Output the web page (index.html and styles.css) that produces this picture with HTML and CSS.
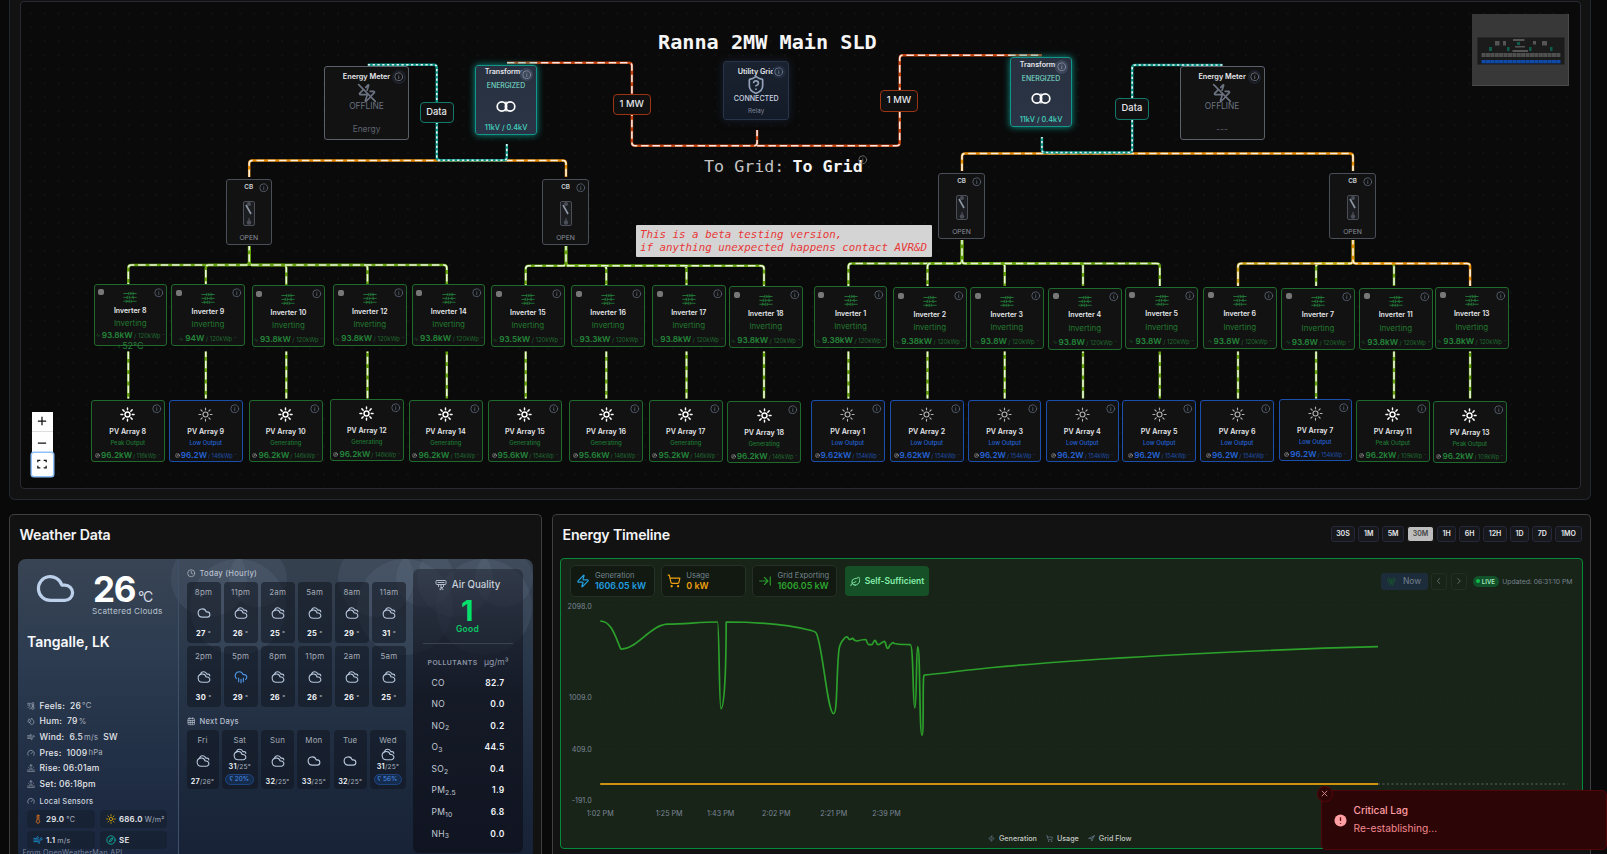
FILE: index.html
```html
<!DOCTYPE html>
<html lang="en">
<head>
<meta charset="utf-8">
<title>Ranna 2MW Main SLD</title>
<link rel="stylesheet" href="styles.css">
</head>
<body>
<svg class="defs" width="0" height="0">
  <symbol id="info" viewBox="0 0 24 24"><circle cx="12" cy="12" r="10"/><path d="M12 16.500v-5M12 8v.01"/></symbol>
  <symbol id="cloud" viewBox="0 0 24 24"><path d="M17.500 19H9a7 7 0 1 1 6.710-9h1.790a4.500 4.500 0 1 1 0 9Z"/></symbol>
  <symbol id="cloudy" viewBox="0 0 24 24"><path d="M17.500 21H9a7 7 0 1 1 6.710-9h1.790a4.500 4.500 0 1 1 0 9Z"/><path d="M22 10a3 3 0 0 0-3-3h-2.207a5.502 5.502 0 0 0-10.702.5"/></symbol>
  <symbol id="rain" viewBox="0 0 24 24"><path d="M4 14.900A7 7 0 1 1 15.710 8h1.790a4.500 4.500 0 0 1 2.500 8.242M16 14v6M8 14v6M12 16v6"/></symbol>
  <symbol id="zap" viewBox="0 0 24 24"><path d="M4 14a1 1 0 0 1-.78-1.630l9.900-10.200a.5.5 0 0 1 .86.46l-1.920 6.020A1 1 0 0 0 13 10h7a1 1 0 0 1 .78 1.630l-9.900 10.200a.5.5 0 0 1-.86-.46l1.920-6.020A1 1 0 0 0 11 14z"/></symbol>
  <symbol id="zapoff" viewBox="0 0 24 24"><path d="M10.500 5.200 13.400 2.100a.5.5 0 0 1 .6.500l-1.900 6M15.700 10H20a1 1 0 0 1 .78 1.630l-3.200 3.300M16.500 16.500l-5.600 5.400a.5.5 0 0 1-.86-.46L12 15.400A1 1 0 0 0 11 14H4a1 1 0 0 1-.78-1.630l4.300-4.400M2 2l20 20"/></symbol>
  <symbol id="cart" viewBox="0 0 24 24"><circle cx="8" cy="21" r="1"/><circle cx="19" cy="21" r="1"/><path d="M2.050 2.050h2l2.660 12.420a2 2 0 0 0 2 1.580h9.780a2 2 0 0 0 1.950-1.570l1.650-7.430H5.120"/></symbol>
  <symbol id="arrowend" viewBox="0 0 24 24"><path d="M17 12H3M11 18l6-6-6-6M21 5v14"/></symbol>
  <symbol id="leaf" viewBox="0 0 24 24"><path d="M11 20A7 7 0 0 1 9.800 6.100C15.500 5 17 4.480 19 2c1 2 2 4.180 2 8 0 5.500-4.780 10-10 10Z"/><path d="M2 21c0-3 1.850-5.360 5.080-6C9.500 14.520 12 13 13 12"/></symbol>
  <symbol id="send" viewBox="0 0 24 24"><path d="M3 11 22 2l-9 19-2-8zM22 2 11 13"/></symbol>
  <symbol id="tower" viewBox="0 0 24 24"><path d="M4.900 16.100C1 12.200 1 5.800 4.900 1.900M7.800 4.700a6.140 6.140 0 0 0-.8 7.500M16.200 4.800c2 2 2.260 5.110.8 7.470M19.100 1.900a9.960 9.960 0 0 1 0 14.100M9.500 18h5M8 22l4-11 4 11"/><circle cx="12" cy="9" r="2"/></symbol>
  <symbol id="clock" viewBox="0 0 24 24"><circle cx="12" cy="12" r="10"/><path d="M12 6v6l4 2"/></symbol>
  <symbol id="calendar" viewBox="0 0 24 24"><path d="M8 2v4M16 2v4M3 10h18M3 15.500h18M9 10v11M15 10v11"/><rect x="3" y="4" width="18" height="18" rx="2"/></symbol>
  <symbol id="gauge" viewBox="0 0 24 24"><path d="m12 14 4-4M3.340 19a10 10 0 1 1 17.320 0"/></symbol>
  <symbol id="wind" viewBox="0 0 24 24"><path d="M17.700 7.700a2.500 2.500 0 1 1 1.800 4.300H2M9.600 4.600A2 2 0 1 1 11 8H2M12.600 19.400A2 2 0 1 0 14 16H2"/></symbol>
  <symbol id="drops" viewBox="0 0 24 24"><path d="M7 16.300c2.200 0 4-1.830 4-4.050 0-2.500-2.800-4-4-6.950-1.200 2.950-4 4.450-4 6.950 0 2.220 1.800 4.050 4 4.050zM12.600 6.600A11 11 0 0 0 14 3c.5 2.500 2 4.900 4 6.500s3 3.500 3 5.500a7 7 0 0 1-11.900 5"/></symbol>
  <symbol id="rise" viewBox="0 0 24 24"><path d="M12 2v8M4.900 10.900l1.400 1.400M2 18h2M20 18h2M19.100 10.900l-1.400 1.400M22 22H2M8 6l4-4 4 4M16 18a4 4 0 0 0-8 0"/></symbol>
  <symbol id="feels" viewBox="0 0 24 24"><path d="M2 4h6M2 9h4M12 4a5 5 0 0 0-2 9M3 17l3-3M9 21v-3M15 4a2.500 2.500 0 0 1 5 0v11a4 4 0 1 1-5 0zM17.500 8v9"/></symbol>
  <symbol id="thermo" viewBox="0 0 24 24"><path d="M14 4v10.540a4 4 0 1 1-4 0V4a2 2 0 0 1 4 0Z"/></symbol>
  <symbol id="sun" viewBox="0 0 24 24"><circle cx="12" cy="12" r="4"/><path d="M12 1.500v3M12 19.500v3M4.600 4.600l2.100 2.100M17.300 17.300l2.100 2.100M1.500 12h3M19.500 12h3M4.600 19.400l2.100-2.100M17.300 6.700l2.100-2.100"/></symbol>
  <symbol id="compass" viewBox="0 0 24 24"><circle cx="12" cy="12" r="10"/><path d="m16.200 7.800-2.900 6.500-5.500 1.900 2.900-6.500z"/></symbol>
  <symbol id="air" viewBox="0 0 24 24"><path d="M4 3h16a2 2 0 0 1 2 2v4a2 2 0 0 1-2 2H4a2 2 0 0 1-2-2V5a2 2 0 0 1 2-2zM6 7h12M7 11v4M17 11v4M12 11v10a2 2 0 0 1-3-1M16 21a2 2 0 0 1 0-4h-4"/></symbol>
  <symbol id="bridge" viewBox="0 0 36 36"><path d="M2 9h13M20 9h14M2 19h9M16 19h18M2 29h14M21 29h13M15 6v6M20 6v6M11 16v6M16 16v6M16 26v6M21 26v6M25 6l4 3-4 3M27 16l-4 3 4 3M8 26l4 3-4 3"/></symbol>
  <symbol id="shield" viewBox="0 0 24 24"><path d="M20 13c0 5-3.500 7.500-7.660 8.950a1 1 0 0 1-.67-.01C7.500 20.500 4 18 4 13V6a1 1 0 0 1 1-1c2 0 4.500-1.200 6.240-2.720a1.170 1.170 0 0 1 1.520 0C14.510 3.810 17 5 19 5a1 1 0 0 1 1 1z"/><path d="M9.100 9a3 3 0 0 1 5.820 1c0 2-3 3-3 3M12 17h.01"/></symbol>
  <symbol id="pulse" viewBox="0 0 24 24"><path d="M2 12h3l4-8 6 16 3-8h4"/></symbol>
</svg>

<section class="sld-card">
  <div class="canvas" id="canvas">
    <svg class="edges" id="edges" width="1561" height="487" viewBox="20.500 2 1561 487"></svg>
    <div class="minimap"><svg width="97" height="72" id="mini"></svg></div>
    <div class="controls">
      <span><svg viewBox="0 0 12 12"><path d="M6 1v10M1 6h10"/></svg></span>
      <span><svg viewBox="0 0 12 12"><path d="M1 6h10"/></svg></span>
      <span class="focus"><svg viewBox="0 0 12 12"><path d="M1 4V1.500h3M8 1.500h3V4M11 8v2.500H8M4 10.500H1V8"/></svg></span>
    </div>
  </div>
</section>

<div class="row">
  <section class="card weather">
    <h2>Weather Data</h2>
    <div class="wx">
      <svg class="puffs" width="516" height="300"><g id="puffs"></g></svg>
      <div class="wx-now">
        <div class="now-top">
          <svg class="ic big"><use href="#cloud"/></svg>
          <div class="temp"><div class="deg"><b>26</b><i>°C</i></div><p>Scattered Clouds</p></div>
        </div>
        <div class="place">Tangalle, LK</div>
        <ul class="facts">
          <li><svg class="ic"><use href="#feels"/></svg>Feels:&nbsp; 26<i>°C</i></li>
          <li><svg class="ic"><use href="#drops"/></svg>Hum:&nbsp; 79<i>%</i></li>
          <li><svg class="ic"><use href="#wind"/></svg>Wind:&nbsp; 6.5<i>m/s</i>&nbsp; SW</li>
          <li><svg class="ic"><use href="#gauge"/></svg>Pres:&nbsp; 1009<i>hPa</i></li>
          <li><svg class="ic"><use href="#rise"/></svg>Rise: 06:01am</li>
          <li><svg class="ic"><use href="#rise"/></svg>Set: 06:18pm</li>
        </ul>
        <div class="local"><svg class="ic"><use href="#gauge"/></svg>Local Sensors</div>
        <div class="sensors">
          <span><svg class="ic orange"><use href="#thermo"/></svg>29.0<i>°C</i></span>
          <span><svg class="ic yellow"><use href="#sun"/></svg>686.0<i>W/m²</i></span>
          <span><svg class="ic sky"><use href="#wind"/></svg>1.1<i>m/s</i></span>
          <span><svg class="ic teal"><use href="#compass"/></svg>SE</span>
        </div>
        <div class="source">From OpenWeatherMap API</div>
      </div>
      <div class="wx-mid">
        <h3><svg class="ic"><use href="#clock"/></svg>Today (Hourly)</h3>
        <div class="hours" id="hours"></div>
        <h3 class="next"><svg class="ic"><use href="#calendar"/></svg>Next Days</h3>
        <div class="days" id="days"></div>
      </div>
      <div class="air">
        <div class="air-t"><svg class="ic"><use href="#air"/></svg>Air Quality</div>
        <div class="aqi">1</div>
        <div class="good">Good</div>
        <div class="poll-h"><b>POLLUTANTS</b><span>µg/m³</span></div>
        <dl>
          <div><dt>CO</dt><dd>82.7</dd></div>
          <div><dt>NO</dt><dd>0.0</dd></div>
          <div><dt>NO<sub>2</sub></dt><dd>0.2</dd></div>
          <div><dt>O<sub>3</sub></dt><dd>44.5</dd></div>
          <div><dt>SO<sub>2</sub></dt><dd>0.4</dd></div>
          <div><dt>PM<sub>2.5</sub></dt><dd>1.9</dd></div>
          <div><dt>PM<sub>10</sub></dt><dd>6.8</dd></div>
          <div><dt>NH<sub>3</sub></dt><dd>0.0</dd></div>
        </dl>
      </div>
    </div>
  </section>

  <section class="card energy">
    <header>
      <h2>Energy Timeline</h2>
      <nav><a>30S</a><a>1M</a><a>5M</a><a class="on">30M</a><a>1H</a><a>6H</a><a>12H</a><a>1D</a><a>7D</a><a>1MO</a></nav>
    </header>
    <div class="chart">
      <div class="stats">
        <div class="stat blue"><svg class="ic"><use href="#zap"/></svg><p>Generation<b>1606.05 kW</b></p></div>
        <div class="stat amber"><svg class="ic"><use href="#cart"/></svg><p>Usage<b>0 kW</b></p></div>
        <div class="stat green"><svg class="ic"><use href="#arrowend"/></svg><p>Grid Exporting<b>1606.05 kW</b></p></div>
        <div class="self"><svg class="ic"><use href="#leaf"/></svg>Self-Sufficient</div>
        <div class="live-bar">
          <span class="now"><svg class="ic"><use href="#tower"/></svg>Now</span>
          <span class="step"><svg class="ic"><path d="M5.800 2.500 3.200 5l2.600 2.500"/></svg></span>
          <span class="step"><svg class="ic"><path d="M3.700 2.500 6.300 5 3.700 7.500"/></svg></span>
          <span class="live">LIVE</span>
          <span class="upd">Updated: 06:31:10 PM</span>
        </div>
      </div>
      <svg class="plot" width="1020" height="220" viewBox="560.800 602 1020 220">
        <g class="grid"><path d="M600 605.500H1567M600 698H1567M600 749.500H1567M600 800H1567"/></g>
        <g class="ylab"><text x="591.500" y="608.800">2098.0</text><text x="591.500" y="700">1009.0</text><text x="591.500" y="752">409.0</text><text x="591.500" y="803">-191.0</text></g>
        <g class="xlab"><text x="600" y="816">1:02 PM</text><text x="669" y="816">1:25 PM</text><text x="720.500" y="816">1:43 PM</text><text x="776" y="816">2:02 PM</text><text x="833.500" y="816">2:21 PM</text><text x="886.300" y="816">2:39 PM</text></g>
        <path class="gen" d="M600 621C611 621 615 636 620.500 649C636 650 650 625 667 624.200C684 624.200 700 622 717.300 622C719 622 719 708.700 720.700 708.700C723 708.700 725.800 690 726 622C765 622 790 625 811 630.500Q815 631.500 815.600 632.500C822 640 827 713.700 833.500 713.700C837.500 713.700 836 670 839 648C841 640 843.500 639.500 845 637.500Q847 635.500 848.500 639Q850 640 852.500 638.200Q854 641 857 641Q862 639.500 865.500 639.500C867 640 866.500 644.500 868.500 644.600H871.500C873 644.600 873.500 640.300 874.700 640.300C876 640.300 876 644.700 878 644.700C880.500 644.700 882 641.300 884.300 641.300C885.500 641.300 886 648.500 887.300 648.500C889 648.500 889 644.500 890.500 644.500Q892.500 641.500 894 643.500C899 644.700 904 644.300 910 644.700C913.500 644.700 912.500 708 914.600 708C916.700 708 915.800 646.500 917.500 646.500C920.200 646.500 919 735.300 921.800 735.300C924 735.300 922 675 924 675.200C946 673 970 669.500 992.700 667.500C1080 659.500 1230 650.500 1377.800 646.700"/>
        <path class="use" d="M600 784H1377.800"/>
        <path class="dots" d="M1377.800 784H1567"/>
      </svg>
      <div class="legend"><span><svg class="ic"><use href="#zap"/></svg>Generation</span><span><svg class="ic"><use href="#cart"/></svg>Usage</span><span><svg class="ic"><use href="#send"/></svg>Grid Flow</span></div>
    </div>
  </section>
</div>

<aside class="toast">
  <span class="close"><svg viewBox="0 0 10 10"><path d="M2 2l6 6M8 2 2 8"/></svg></span>
  <span class="bang"><svg viewBox="0 0 14 14"><circle cx="7" cy="7" r="6.500"/><path d="M7 3.500v4M7 10v.8"/></svg></span>
  <p>Critical Lag<small>Re-establishing...</small></p>
</aside>
<script src="app.js"></script>
</body>
</html>
```
FILE: styles.css
```css
* { box-sizing: border-box; }
body { margin: 0; width: 1607px; height: 854px; overflow: hidden; position: relative; background: #090909; color: #e5e7eb; font-family: Inter, "Liberation Sans", sans-serif; }
h2, h3, p, ul, dl, dd { margin: 0; padding: 0; }
i { font-style: normal; }
.defs { position: absolute; }
.ic { fill: none; stroke: currentColor; stroke-width: 2; stroke-linecap: round; stroke-linejoin: round; flex: none; overflow: visible; }

/* single line diagram */
.sld-card { margin-left: 9px; width: 1582px; height: 499.500px; padding: 1px 9.500px 10px; background: #121212; border: 1px solid #232733; border-top: 0; border-radius: 0 0 6px 6px; }
.canvas { position: relative; height: 488px; border: 1px solid #282b35; border-radius: 4px; background-color: #0a0a0a; background-image: radial-gradient(circle at 50% 50%, #232323 0, #1b1b1b .5px, transparent .9px); background-size: 13.970px 13.970px; background-position: 2.700px 4.500px; overflow: hidden; }
.edges { position: absolute; left: 0; top: 0; fill: none; stroke-linejoin: round; }
.node { position: absolute; background: #121212; border: 1px solid #1f6b2e; border-radius: 3px; text-align: center; white-space: nowrap; }
.node > * { position: absolute; left: 0; right: 0; margin: auto; line-height: 10px; }
.node .info { left: auto; right: 2.500px; top: 3px; width: 9.500px; height: 9.500px; color: #566070; margin: 0; stroke-width: 2.300; }
.nm { font-size: 7px; font-weight: 600; color: #e5e7eb; }
.inv, .pv { width: 73.500px; height: 62px; }
.inv .nm { top: 21.700px; }
.inv .led { left: 3.500px; top: 4.500px; width: 6px; height: 6px; margin: 0; border-radius: 2px; background: #777; }
.inv .ico { top: 5.500px; width: 14px; height: 14px; color: #23803a; stroke-width: 2.200; }
.inv .st { top: 34px; font-size: 7.900px; color: #22782f; }
.pw { top: 48px; display: flex; justify-content: center; align-items: baseline; gap: 1.500px; color: #24863a; font-size: 6px; }
.pw b { font-size: 8.200px; font-weight: 600; }
.pw span { opacity: .75; }
.pw svg { width: 4.500px; height: 4.500px; opacity: .8; }
.inv.hot .nm { top: 21.500px; }
.inv.hot .st { top: 33.300px; }
.inv.hot .pw { top: 45px; }
.inv .tc { top: 56.500px; font-size: 8.900px; color: #248039; display: flex; align-items: center; justify-content: center; gap: 1px; }
.inv .tc svg { width: 4px; height: 5px; }
.pv .ico { top: 6px; width: 15px; height: 15px; color: #fff; stroke-width: 2.300; }
.pv .nm { top: 25.700px; font-size: 7.100px; }
.pv .st { top: 36.500px; font-size: 5.900px; font-weight: 500; color: #1f7832; }
.pv .pw svg { color: #bbb; opacity: 1; width: 5px; height: 5px; }
.pv .pw { gap: 1px; top: 49px; }
.pv .pw span { font-size: 5.600px; }
.pv.low { border-color: #1b4fae; }
.pv.low .st, .pv.low .pw { color: #2463d6; }
.pv.low .ico { color: #b5b5b5; stroke-width: 1.800; }
.cb { width: 46.500px; height: 66.500px; border-color: #4a4e58; font-size: 6.800px; color: #8b919c; }
.cb .nm { top: 2.500px; font-size: 6.300px; color: #d1d5db; }
.cb .sw { top: 21px; width: 12px; height: 25px; }
.cb .st { top: 53px; }
.em { width: 85px; height: 74px; border-color: #5c606a; color: #6b7280; }
.em .nm { top: 4.800px; font-size: 7.300px; }
.em .ico { top: 15.500px; width: 20px; height: 20px; }
.em .st { top: 34px; font-size: 8.400px; }
.em .ft { top: 57px; font-size: 8.400px; color: #5e6470; }
.em .info { top: 5px; right: 4.500px; color: #6b7280; border-radius: 50%; box-shadow: 0 0 0 2px #1c212b; }
.tr { width: 62px; height: 70px; border-color: #12958a; background: linear-gradient(#293140, #2a3446); box-shadow: 0 0 7px #0d9488; color: #5eead4; }
.tr .nm { top: 1.500px; font-size: 7.100px; }
.tr .st { top: 15.500px; font-size: 6.900px; color: #7fe3d3; }
.tr .ico { top: 33px; width: 22px; height: 15px; color: #fff; }
.tr .ft { top: 57px; font-size: 7.300px; font-weight: 500; color: #45d6c0; }
.tr .info { top: 4px; right: 5px; color: #7f8ba0; background: #3d4759; border-radius: 50%; box-shadow: 0 0 0 2px #3d4759; }
.ug { width: 66px; height: 58.500px; border-color: #283548; background: linear-gradient(#1a2230, #141b28); box-shadow: 0 0 8px #172032; }
.ug .nm { top: 5px; font-size: 7.200px; }
.ug .ico { top: 12.500px; width: 20px; height: 20px; color: #94a3b8; }
.ug .st { top: 32px; font-size: 7.100px; font-weight: 500; color: #cbd5e1; }
.ug .ft { top: 44px; font-size: 6.300px; color: #7d8799; }
.ug .info { top: 5px; right: 4.500px; color: #64748b; background: #222c3d; border-radius: 50%; box-shadow: 0 0 0 1.500px #222c3d; }
.tag { position: absolute; height: 21.500px; border: 1px solid #12796b; border-radius: 4px; background: #101010; font-size: 9.400px; font-weight: 500; text-align: center; line-height: 18.500px; }
.tag.data { width: 34px; }
.tag.mw { width: 38px; border-color: #9a3412; }
.title, .togrid, .beta { position: absolute; font-family: "DejaVu Sans Mono", monospace; white-space: pre; }
.title { font-size: 20.200px; font-weight: 700; color: #f5f5f5; line-height: 24px; }
.togrid { font-size: 16.700px; color: #c4c4c4; line-height: 20px; }
.togrid b { color: #f5f5f5; margin-left: 8px; }
.togrid svg { position: absolute; right: -5px; top: -1px; width: 9.500px; height: 9.500px; color: #7b7b7b; }
.beta { width: 296px; height: 32px; padding: 3px 4px; background: #d4d4d4; color: #e83838; font-size: 10.850px; font-style: italic; line-height: 13px; border-radius: 1px; }
.minimap { position: absolute; right: 11px; top: 12px; width: 96.500px; height: 72px; background: #383838; border-right: 1px solid #4a4a4a; border-bottom: 1px solid #4a4a4a; }
.controls { position: absolute; left: 11px; bottom: 12.500px; width: 21.500px; display: flex; flex-direction: column; background: #fefefe; }
.controls span { height: 20.500px; display: flex; align-items: center; justify-content: center; border-bottom: 1px solid #ddd; }
.controls span:nth-child(2) { height: 21px; border: 0; }
.controls svg { width: 10px; height: 10px; fill: none; stroke: #111; stroke-width: 1.500; }
.controls .focus { height: 22.500px; border: 0; border-radius: 2px; box-shadow: 0 0 0 1.500px #8fc0f8; }

/* lower row */
.row { display: flex; gap: 10px; margin: 14.500px 0 0 9px; width: 1582px; }
.card { background: #121212; border: 1px solid #3f3f42; border-bottom: 0; border-radius: 5px 5px 0 0; height: 360px; padding: 0 8px; }
h2 { font-size: 14.200px; font-weight: 600; letter-spacing: -.2px; line-height: 20px; color: #f3f4f6; padding-left: 1.500px; }
.weather { width: 533px; flex: none; padding-top: 9.500px; }
.weather h2 { margin-bottom: 14px; }
.energy { flex: 1; padding-top: 9.500px; }
.wx { position: relative; display: flex; height: 300px; border-radius: 8px; overflow: hidden; background: linear-gradient(#36414f, #2a384b 33%, #1b273b 78%, #172237); letter-spacing: .25px; }
.puffs { position: absolute; left: 0; top: 0; fill: #93a4c0; fill-opacity: .1; }
.wx > div { position: relative; }
.wx-now { width: 160.500px; padding: 14px 9px 0 9px; border-right: 1px solid #41506a; background: linear-gradient(rgba(70,88,112,.15), rgba(40,60,100,.18)); }
.now-top { display: flex; height: 48px; padding-left: 8px; }
.big { width: 41px; height: 41px; color: #bdd0ea; stroke-width: 1.900; margin-top: -5px; }
.temp { margin-left: 16px; color: #fff; white-space: nowrap; }
.deg { display: flex; align-items: baseline; height: 32px; line-height: 33px; }
.temp b { font-size: 35px; font-weight: 700; letter-spacing: -1.200px; margin-left: 1px; }
.temp i { font-size: 14px; margin-left: 3px; color: #d4dae4; letter-spacing: -1px; }
.temp p { font-size: 8.200px; line-height: 10px; color: #b8c1ce; margin-top: 1px; }
.place { font-size: 14px; font-weight: 600; line-height: 20px; margin-top: 11px; color: #f8fafc; letter-spacing: 0; }
.facts { list-style: none; margin-top: 46.500px; font-size: 8.500px; font-weight: 500; }
.facts li { display: flex; align-items: center; height: 15.650px; white-space: nowrap; }
.facts .ic, .local .ic { width: 8px; height: 8px; color: #a6afbd; margin-right: 4.500px; }
.wx i { font-weight: 400; color: #a8b1bf; font-size: .9em; margin-left: 1px; }
.wx .temp i { font-size: 14px; color: #d4dae4; margin-left: 2.500px; }
.local { display: flex; align-items: center; height: 15px; font-size: 7.500px; font-weight: 500; color: #cdd5df; margin-top: 2px; }
.sensors { display: grid; grid-template-columns: 68px 67px; gap: 3px 5px; margin-top: 1.500px; font-size: 7.900px; font-weight: 600; }
.sensors span { height: 18px; display: flex; align-items: center; padding-left: 5.500px; background: rgba(22,30,46,.65); border-radius: 4px; white-space: nowrap; }
.sensors i { margin-left: 2px; }
.sensors .ic { width: 10px; height: 10px; margin-right: 3.500px; }
.orange { color: #f07a1a; } .yellow { color: #d6a908; } .sky { color: #1a9ae0; } .teal { color: #14b8a6; }
.source { font-size: 7.200px; color: #77839a; margin: -1px 0 0 -4.500px; line-height: 10px; }
.wx-mid { width: 227px; padding: 8.500px 0 0 8px; }
h3 { display: flex; align-items: center; gap: 4.500px; height: 12px; font-size: 7.600px; font-weight: 500; color: #b6bfcc; }
h3 .ic { width: 8.500px; height: 8.500px; }
.next { margin-top: 8.500px; }
.hours { display: grid; grid-template-columns: repeat(6, 1fr); gap: 3px; width: 219.500px; margin-top: 2.500px; }
.tile { height: 61px; border-radius: 4px; background: rgba(18,22,32,.58); display: flex; flex-direction: column; align-items: center; padding-top: 5px; font-size: 7.900px; line-height: 10px; color: #a4abb7; }
.tile .ic { width: 14px; height: 14px; color: #b7c6dc; margin: 9.500px 0 9px; stroke-width: 1.900; }
.tile .ic.rainy { color: #4f9bf2; }
.tile b { font-size: 7.500px; font-weight: 700; color: #f1f5f9; }
.tile i { margin-left: 0; }
.days { display: grid; grid-template-columns: 32px 36px 33px 33px 33px 36px; justify-content: space-between; width: 219.500px; margin-top: 2.500px; }
.days .tile { height: 59px; }
.days b { font-size: 7.300px; white-space: nowrap; font-weight: 600; }
.days .tile .ic { margin-bottom: 8.500px; }
.days .tile.wet > .ic { margin: 2px 0 0; height: 15px; }
.days .wet em { font-style: normal; font-size: 6.500px; color: #4a90ea; background: #162c4d; border: 1px solid #1f4580; border-radius: 6px; height: 11px; line-height: 9px; padding: 0 4px 0 3px; margin-top: 2px; white-space: nowrap; letter-spacing: 0; }
.air { margin: 10px 0 0 7px; width: 110px; height: 284px; padding: 10px 15px 0 15px; border-radius: 6px; background: linear-gradient(rgba(28,32,44,.5), rgba(19,22,34,.86) 45%, rgba(15,18,30,.85)); }
.air-t { display: flex; align-items: center; justify-content: center; gap: 5px; font-size: 9.700px; font-weight: 500; line-height: 12px; color: #c9d0da; white-space: nowrap; letter-spacing: 0; }
.air-t .ic { width: 12px; height: 12px; color: #b3bccb; }
.aqi { text-align: center; font-size: 29px; font-weight: 700; color: #05df6b; line-height: 28px; margin-top: 6px; }
.good { text-align: center; font-size: 8.500px; font-weight: 600; color: #0ccb66; line-height: 10px; margin: -1px -5px 0; padding-bottom: 9.500px; border-bottom: 1px solid #3b4351; }
.poll-h { display: flex; justify-content: space-between; align-items: baseline; height: 18px; margin: 13px -1px 0 0; color: #8f98a8; font-size: 8.500px; letter-spacing: 0; white-space: nowrap; }
.poll-h b { font-size: 6.800px; font-weight: 600; letter-spacing: .5px; }
.air dl > div { display: flex; justify-content: space-between; height: 21.600px; align-items: baseline; padding: 2.500px 3px 0 4px; font-size: 8.500px; color: #c2cad6; }
.air dd { font-weight: 600; color: #f1f5f9; }
.air sub { font-size: .8em; line-height: 0; position: relative; top: -1px; }

/* energy timeline */
.energy header { display: flex; justify-content: space-between; height: 33.500px; }
nav { display: flex; gap: 3px; margin: 1.500px .5px 0 0; }
nav a { height: 16px; padding: 0 4.620px; border: 1px solid #25283a; border-radius: 3px; background: #17181c; font-size: 7px; font-weight: 600; line-height: 14px; color: #e5e7eb; }
nav .on { background: #bdbdbd; border-color: #121212; color: #444; }
.chart { position: relative; height: 291px; border: 1px solid #058a3c; border-radius: 4px; background: #192418; margin: 0 -.5px 0 -1px; }
.stats { display: flex; align-items: center; padding: 6px 9px 0 8.500px; height: 38px; gap: 6px; }
.stat { width: 85.300px; height: 32px; display: flex; align-items: center; padding-left: 5px; gap: 5.500px; background: #111911; border: 1px solid #253026; border-radius: 5px; font-size: 7.600px; line-height: 9px; }
.stat p { color: #74838c; white-space: nowrap; }
.stat b { display: block; font-size: 8.900px; font-weight: 600; line-height: 12px; }
.stat .ic { width: 14px; height: 14px; }
.blue { color: #219fe0; } .amber { color: #f0a010; } .green { color: #2a9c2a; }
.blue b { color: #219fe0; } .amber b { color: #f0a010; } .green b { color: #2ea32e; }
.self { width: 84px; height: 30.500px; display: flex; align-items: center; justify-content: center; gap: 4px; border-radius: 4px; background: #165026; color: #86efac; font-size: 8.500px; font-weight: 600; white-space: nowrap; margin-left: 1.500px; }
.self .ic { width: 11px; height: 11px; }
.live-bar { margin-left: auto; display: flex; align-items: center; gap: 3.700px; color: #75828e; font-size: 6.800px; white-space: nowrap; }
.now { width: 47px; height: 17px; background: #1d2c3a; border-radius: 3px; display: flex; align-items: center; justify-content: center; gap: 7px; font-size: 8.500px; color: #72808f; }
.now .ic { width: 9px; height: 9px; color: #155c2c; }
.step { width: 16px; height: 17px; border: 1px solid #222d26; border-radius: 3px; display: flex; align-items: center; justify-content: center; color: #5d6a68; }
.step .ic { width: 10px; height: 10px; stroke-width: 1; }
.live { margin-left: 2px; width: 26px; height: 11px; border-radius: 6px; background: #12522a; color: #a7e8bd; font-size: 6px; font-weight: 600; display: flex; align-items: center; justify-content: center; gap: 1.500px; }
.live::before { content: ""; width: 4px; height: 4px; border-radius: 50%; background: #10b94a; }
.plot { display: block; margin-top: 5px; }
.plot text { font-size: 7.200px; fill: #7a8797; }
.ylab { text-anchor: end; } .xlab { text-anchor: middle; }
.plot path { fill: none; stroke-linejoin: round; }
.grid path { stroke: #1c281d; stroke-dasharray: 3 3; }
.plot .gen { stroke: #2ba02b; stroke-width: 1.700; }
.plot .use { stroke: #cf9210; stroke-width: 2; }
.plot .dots { stroke: #46504a; stroke-width: 1.300; stroke-dasharray: 2 2.500; }
.legend { display: flex; justify-content: center; gap: 9px; font-size: 7.200px; font-weight: 500; color: #c4c9c5; margin: 12px 23px 0 0; line-height: 9px; }
.legend span { display: flex; gap: 4px; align-items: center; }
.legend .ic { width: 7px; height: 7px; color: #7488a0; }

.toast { position: absolute; left: 1321px; top: 790px; width: 285.500px; height: 60px; background: #2c0507; border: 1px solid #500509; border-radius: 5px; display: flex; align-items: center; padding-left: 11.500px; color: #ff9ea3; }
.bang, .bang svg { width: 13px; height: 13px; }
.bang svg { display: block; fill: #ff9ea3; stroke: #5a0b10; stroke-width: 1.400; }
.bang circle { stroke: none; }
.toast p { margin-left: 7px; font-size: 10.100px; font-weight: 500; line-height: 15px; }
.toast small { display: block; font-size: 10.200px; font-weight: 400; line-height: 18px; margin-top: .5px; color: #f58a90; }
.close { position: absolute; left: -5px; top: -5px; width: 15.500px; height: 15.500px; border-radius: 50%; background: #2c0507; border: 1px solid #57060b; display: flex; align-items: center; justify-content: center; }
.close svg { width: 9px; height: 9px; stroke: #d98c90; fill: none; }
```
FILE: app.js
```js
const canvas = document.getElementById('canvas');
const OX = 20.5, OY = 2;
const use = (id, cls) => `<svg class="ic ${cls || ''}"><use href="#${id}"/></svg>`;

function node(cls, x, y, html) {
  const el = document.createElement('div');
  el.className = cls;
  el.style.left = (x - OX) + 'px';
  el.style.top = (y - OY) + 'px';
  el.innerHTML = html;
  canvas.appendChild(el);
}

/* edges: coloured base stroke with a white dashed flow on top */
let out = '';
function edge(color, pts, dash, offset) {
  const r = 3;
  let d = `M${pts[0][0]} ${pts[0][1]}`;
  for (let i = 1; i < pts.length - 1; i++) {
    const [a, b, c] = [pts[i - 1], pts[i], pts[i + 1]];
    d += `L${b[0] - Math.sign(b[0] - a[0]) * r} ${b[1] - Math.sign(b[1] - a[1]) * r}`;
    d += `Q${b[0]} ${b[1]} ${b[0] + Math.sign(c[0] - b[0]) * r} ${b[1] + Math.sign(c[1] - b[1]) * r}`;
  }
  const e = pts[pts.length - 1];
  d += `L${e[0]} ${e[1]}`;
  out += `<path d="${d}" stroke="${color}" stroke-width="2.500"/><path d="${d}" stroke="#fff" stroke-opacity=".88" stroke-width="1.600" stroke-dasharray="${dash || '7.500 3.800'}" stroke-dashoffset="${offset || 0}"/>`;
}
const T = '#0d9488', O = '#e68a00', R = '#c2410c', G = '#65a30d', Y = '#c9a30d';
edge(O, [[248.7, 177], [248.7, 160.5], [506.5, 160.5], [565.5, 160.5], [565.5, 177]]);
edge(O, [[961.5, 171], [961.5, 153.5], [1352.5, 153.5], [1352.5, 171]]);
edge(T, [[367.300, 64.7], [436.3, 64.7], [436.3, 160.3], [506.3, 160.3], [506.3, 144]], '2.300 2.500');
edge(T, [[1222, 65], [1131.7, 65], [1131.7, 152.5], [1041.4, 152.5], [1041.4, 137]], '2.300 2.500');
edge(R, [[506.5, 62.7], [631.4, 62.7], [631.4, 145.8], [756.6, 145.8], [756.6, 130]]);
edge(R, [[756.6, 145.8], [899.2, 145.8], [899.2, 55.3], [1041.4, 55.3]]);

const groups = [
  { cb: [248.7, 178.5], y: 265, xs: [127.8, 205.3, 285.8, 367, 446.3] },
  { cb: [565.5, 178.5], y: 265.7, xs: [525.2, 605.8, 686, 763.5] },
  { cb: [961.5, 172.5], y: 263.5, xs: [847.9, 927, 1004.2, 1082.5, 1159.3] },
  { cb: [1352.5, 172.5], y: 263.5, xs: [1315.6, 1393.5, 1237.5, 1469.6], cs: [G, G, Y, O] }
];
groups.forEach(g => {
  g.xs.forEach((x, i) => {
    edge(g.cs ? g.cs[i] : G, [[g.cb[0], g.cb[1] + 67.5], [g.cb[0], g.y], [x, g.y], [x, 286]], null, 3);
    edge(G, [[x, 351.5], [x, 398.5]], null, i * 2);
  });
  node('node cb', g.cb[0] - 23.2, g.cb[1], `<div class="nm">CB</div>${use('info', 'info')}
    <svg class="sw" viewBox="0 0 12 25"><rect x=".5" y=".5" width="11" height="24" rx="1.500" fill="#1b1d21" stroke="#4a4e57"/><circle cx="6" cy="3" r="2" fill="#4a4e57"/><path d="M3 4l5 9" stroke="#8f98a6" stroke-width="1.600"/><path d="M6 17v4" stroke="#555a63"/><circle cx="6" cy="21.500" r="2.200" fill="#4a4e57"/></svg>
    <div class="st">OPEN</div>`);
});
document.getElementById('edges').innerHTML = out;

const inv = [
  [8, 93.5, 283.7, '93.8kW'], [9, 171.2, 284, '94W'], [10, 251.7, 285, '93.8kW'], [12, 333, 284, '93.8kW'], [14, 411.9, 284, '93.8kW'],
  [15, 491, 285, '93.5kW'], [16, 571.3, 285.3, '93.3kW'], [17, 652, 285.3, '93.8kW'], [18, 729, 286.3, '93.8kW'],
  [1, 813.8, 286.3, '9.38kW'], [2, 893, 287, '9.38kW'], [3, 970, 287, '93.8W'], [4, 1048, 287.7, '93.8W'], [5, 1124.9, 286.7, '93.8W'],
  [6, 1203, 286.7, '93.8W'], [7, 1281.2, 287.5, '93.8W'], [11, 1359, 287.5, '93.8kW'], [13, 1435, 286.7, '93.8kW']
];
inv.forEach(([n, x, y, p]) => node('node inv' + (n === 8 ? ' hot' : ''), x, y,
  `<span class="led"></span>${use('bridge', 'ico')}${use('info', 'info')}<div class="nm">Inverter ${n}</div><div class="st">Inverting</div>
   <div class="pw">${use('pulse')}<b>${p}</b><span>/ 120kWp ⁻</span></div>${n === 8 ? `<div class="tc">${use('thermo')}52°C</div>` : ''}`));

const pv = [
  [8, 91, 400.3, '96.2kW', 116, 'p'], [9, 169, 400, '96.2W', 146, 'l'], [10, 249, 400, '96.2kW', 146, 'g'], [12, 330, 399.3, '96.2kW', 146, 'g'], [14, 409, 400.3, '96.2kW', 154, 'g'],
  [15, 488, 400, '95.6kW', 154, 'g'], [16, 569.3, 400, '95.6kW', 146, 'g'], [17, 649, 400, '95.2kW', 146, 'g'], [18, 727.3, 401, '96.2kW', 146, 'g'],
  [1, 811, 400.3, '9.62kW', 154, 'l'], [2, 890, 400.3, '9.62kW', 154, 'l'], [3, 967.9, 400, '96.2W', 154, 'l'], [4, 1045.6, 400, '96.2W', 154, 'l'], [5, 1122.4, 400.3, '96.2W', 154, 'l'],
  [6, 1200.3, 400, '96.2W', 154, 'l'], [7, 1278.5, 399.3, '96.2W', 154, 'l'], [11, 1356, 400, '96.2kW', 109, 'p'], [13, 1433, 401, '96.2kW', 109, 'p']
];
const label = { p: 'Peak Output', l: 'Low Output', g: 'Generating' };
pv.forEach(([n, x, y, p, k, s]) => node('node pv' + (s === 'l' ? ' low' : ''), x, y,
  `${use('sun', 'ico')}${use('info', 'info')}<div class="nm">PV Array ${n}</div><div class="st">${label[s]}</div>
   <div class="pw">${use('compass')}<b>${p}</b><span>/ ${k}kWp ⁻</span></div>`));

const meter = ft => `<div class="nm">Energy Meter</div>${use('info', 'info')}${use('zapoff', 'ico')}<div class="st">OFFLINE</div><div class="ft">${ft}</div>`;
node('node em', 324, 66, meter('Energy'));
node('node em', 1179.6, 66.4, meter('---'));
const tr = `<div class="nm">Transformer</div>${use('info', 'info')}<div class="st">ENERGIZED</div>
  <svg class="ico" viewBox="0 0 22 15" fill="none" stroke="currentColor" stroke-width="1.700"><circle cx="6.800" cy="7.500" r="4.600"/><circle cx="15.200" cy="7.500" r="4.600"/><path d="M10.200 2.500v10M11.800 2.500v10" stroke-width="1"/></svg>
  <div class="ft">11kV / 0.4kV</div>`;
node('node tr', 475, 64.7, tr);
node('node tr', 1010, 57, tr);
node('node ug', 723.2, 61, `<div class="nm">Utility Grid</div>${use('info', 'info')}${use('shield', 'ico')}<div class="st">CONNECTED</div><div class="ft">Relay</div>`);
node('tag data', 419.5, 101.5, 'Data');
node('tag data', 1114.9, 98, 'Data');
node('tag mw', 612.7, 93.7, '1 MW');
node('tag mw', 880, 90, '1 MW');
node('title', 658, 30, 'Ranna 2MW Main SLD');
node('togrid', 704, 155.5, `To Grid:<b>To Grid</b>${use('info')}`);
node('beta', 635.9, 225, 'This is a beta testing version,\nif anything unexpected happens contact AVR&amp;D');

/* minimap */
let m = '<rect x="5.500" y="23.500" width="87" height="27" rx="1" fill="#1b1b1b" stroke="#292929"/>';
const box = (x, y, w, h, c) => m += `<rect x="${x}" y="${y}" width="${w}" height="${h}" fill="${c}"/>`;
[[23, 27, 4.5, 4.5], [31, 27, 3, 4.5], [61, 27, 3, 3.5], [70, 27, 5, 4.5], [41, 25, 11.500, 2], [43, 32, 10, 1.500], [40.500, 36, 15.500, 2]].forEach(b => box(...b, '#555'));
[[17, 33, 3, 4], [35, 33, 2.500, 4], [57, 33, 2.500, 4], [78, 33, 2.500, 4], [45, 28, 3, 3]].forEach(b => box(...b, '#0b5c4d'));
for (let i = 0; i < 18; i++) { box(9.5 + i * 4.4, 39, 4.1, 4, '#4f4f4f'); box(9.5 + i * 4.4, 46, 4.2, 3.3, '#0f4aa8'); }
document.getElementById('mini').innerHTML = m;

/* weather */
document.getElementById('puffs').innerHTML = [[191, 20, 38], [220, 48, 48], [240, 19, 29], [358, 20, 38], [387, 48, 48], [407, 19, 29], [437, 20, 38], [466, 48, 48], [486, 19, 29]]
  .map(c => `<circle cx="${c[0]}" cy="${c[1]}" r="${c[2]}"/>`).join('');
document.getElementById('hours').innerHTML = [['8pm', 27, 'cloud'], ['11pm', 26], ['2am', 25], ['5am', 25], ['8am', 29], ['11am', 31], ['2pm', 30], ['5pm', 29, 'rain'], ['8pm', 26], ['11pm', 26], ['2am', 26], ['5am', 25]]
  .map(([t, v, i]) => `<div class="tile">${t}${use(i || 'cloudy', i === 'rain' ? 'rainy' : '')}<b>${v}<i> °</i></b></div>`).join('');
document.getElementById('days').innerHTML = [['Fri', 27, 26], ['Sat', 31, 25, 20], ['Sun', 32, 25], ['Mon', 33, 25, 0, 'cloud'], ['Tue', 32, 25, 0, 'cloud'], ['Wed', 31, 25, 56]]
  .map(([d, h, l, r, i]) => `<div class="tile${r ? ' wet' : ''}">${d}${use(i || 'cloudy')}<b>${h}<i>/${l}°</i></b>${r ? `<em>ʕ ${r}%</em>` : ''}</div>`).join('');
```
